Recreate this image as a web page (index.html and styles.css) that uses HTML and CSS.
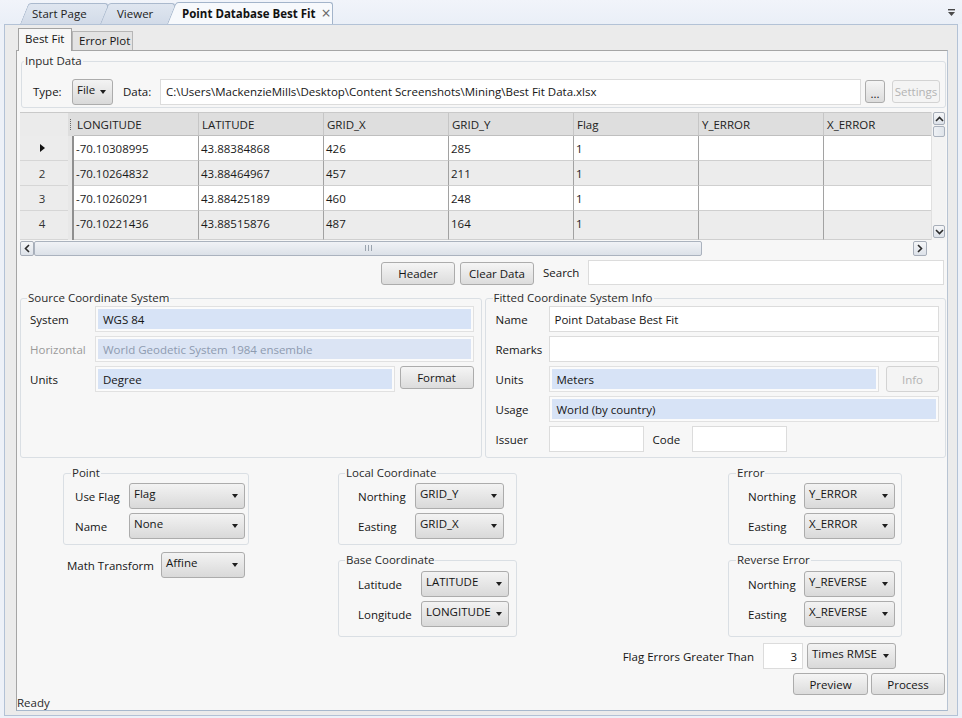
FILE: index.html
```html
<!DOCTYPE html>
<html>
<head>
<meta charset="utf-8">
<title>Point Database Best Fit</title>
<link rel="stylesheet" href="styles.css">
</head>
<body>
<div class="topbar">
  <div class="tab tab-start"><span class="tab-text">Start Page</span></div>
  <div class="tab tab-viewer"><span class="tab-text">Viewer</span></div>
  <div class="tab tab-active"><span class="tab-text">Point Database Best Fit</span><span class="tab-close">×</span></div>
  <svg class="overflow-icon" width="9" height="8" viewBox="0 0 9 8"><rect x="1" y="0" width="7" height="1.4" fill="#4a4a4a"/><polygon points="1,3 8,3 4.5,7" fill="#4a4a4a"/></svg>
</div>
<div class="frame">
  <div class="subtabs">
    <div class="subtab active">Best Fit</div>
    <div class="subtab">Error Plot</div>
  </div>
  <div class="panel">
    <fieldset class="group input-group">
      <legend>Input Data</legend>
      <div class="type-row">
        <span class="type-label">Type:</span>
        <div class="select sel-file"><span class="sel-txt">File</span><span class="caret"></span></div>
        <span class="data-label">Data:</span>
        <div class="textbox path">C:\Users\MackenzieMills\Desktop\Content Screenshots\Mining\Best Fit Data.xlsx</div>
        <div class="btn btn-dots">...</div>
        <div class="btn disabled btn-settings">Settings</div>
      </div>
    </fieldset>

    <div class="datagrid">
      <div class="gtable">
        <div class="grow ghead">
          <div class="rh corner"></div>
          <div class="mk"><span class="dots"></span></div>
          <div class="hc">LONGITUDE</div>
          <div class="hc">LATITUDE</div>
          <div class="hc">GRID_X</div>
          <div class="hc">GRID_Y</div>
          <div class="hc">Flag</div>
          <div class="hc">Y_ERROR</div>
          <div class="hc last">X_ERROR</div>
        </div>
        <div class="grow odd">
          <div class="rh"><span class="cur-tri"></span></div>
          <div class="mk"></div>
          <div class="c">-70.10308995</div><div class="c">43.88384868</div><div class="c">426</div><div class="c">285</div><div class="c">1</div><div class="c"></div><div class="c last"></div>
        </div>
        <div class="grow even">
          <div class="rh">2</div>
          <div class="mk"></div>
          <div class="c">-70.10264832</div><div class="c">43.88464967</div><div class="c">457</div><div class="c">211</div><div class="c">1</div><div class="c"></div><div class="c last"></div>
        </div>
        <div class="grow odd">
          <div class="rh">3</div>
          <div class="mk"></div>
          <div class="c">-70.10260291</div><div class="c">43.88425189</div><div class="c">460</div><div class="c">248</div><div class="c">1</div><div class="c"></div><div class="c last"></div>
        </div>
        <div class="grow even tall">
          <div class="rh">4</div>
          <div class="mk"></div>
          <div class="c">-70.10221436</div><div class="c">43.88515876</div><div class="c">487</div><div class="c">164</div><div class="c">1</div><div class="c"></div><div class="c last"></div>
        </div>
      </div>
      <div class="vscroll">
        <div class="sbtn"><svg width="9" height="6" viewBox="0 0 9 6"><polyline points="1,5 4.5,1.5 8,5" fill="none" stroke="#2b2b2b" stroke-width="1.6"/></svg></div>
        <div class="vthumb"></div>
        <div class="vtrack"></div>
        <div class="sbtn"><svg width="9" height="6" viewBox="0 0 9 6"><polyline points="1,1 4.5,4.5 8,1" fill="none" stroke="#2b2b2b" stroke-width="1.6"/></svg></div>
      </div>
      <div class="hscroll">
        <div class="sbtn hbtn"><svg width="6" height="9" viewBox="0 0 6 9"><polyline points="5,1 1.5,4.5 5,8" fill="none" stroke="#2b2b2b" stroke-width="1.6"/></svg></div>
        <div class="hthumb"><span class="grip"></span><span class="grip"></span><span class="grip"></span></div>
        <div class="htrack"></div>
        <div class="sbtn hbtn"><svg width="6" height="9" viewBox="0 0 6 9"><polyline points="1,1 4.5,4.5 1,8" fill="none" stroke="#2b2b2b" stroke-width="1.6"/></svg></div>
      </div>
      <div class="corner-box"></div>
    </div>

    <div class="btn-row">
      <div class="btn btn-header">Header</div>
      <div class="btn btn-clear">Clear Data</div>
      <span class="search-label">Search</span>
      <div class="textbox search"></div>
    </div>

    <div class="cs-row">
      <fieldset class="group source">
        <legend>Source Coordinate System</legend>
        <div class="form src-form">
          <span class="flabel">System</span>
          <div class="field"><div class="fill">WGS 84</div></div>
          <span class="flabel muted">Horizontal</span>
          <div class="field"><div class="fill muted-fill">World Geodetic System 1984 ensemble</div></div>
          <span class="flabel">Units</span>
          <div class="field-with-btn">
            <div class="field grow1"><div class="fill">Degree</div></div>
            <div class="btn btn-format">Format</div>
          </div>
        </div>
      </fieldset>
      <fieldset class="group fitted">
        <legend>Fitted Coordinate System Info</legend>
        <div class="form fit-form">
          <span class="flabel">Name</span>
          <div class="textbox tb-full">Point Database Best Fit</div>
          <span class="flabel">Remarks</span>
          <div class="textbox tb-full"></div>
          <span class="flabel">Units</span>
          <div class="field-with-btn gap7">
            <div class="field grow1"><div class="fill">Meters</div></div>
            <div class="btn disabled btn-info">Info</div>
          </div>
          <span class="flabel">Usage</span>
          <div class="field"><div class="fill">World (by country)</div></div>
          <span class="flabel">Issuer</span>
          <div class="issuer-row">
            <div class="textbox tb-small"></div>
            <span class="code-label">Code</span>
            <div class="textbox tb-small"></div>
          </div>
        </div>
      </fieldset>
    </div>

    <div class="params">
      <div class="pcol col1">
        <fieldset class="group g-point">
          <legend>Point</legend>
          <div class="pform">
            <span>Use Flag</span>
            <div class="select"><span class="sel-txt">Flag</span><span class="caret"></span></div>
            <span>Name</span>
            <div class="select"><span class="sel-txt">None</span><span class="caret"></span></div>
          </div>
        </fieldset>
        <div class="math-row">
          <span class="math-label">Math Transform</span>
          <div class="select sel-math"><span class="sel-txt">Affine</span><span class="caret"></span></div>
        </div>
      </div>
      <div class="pcol col2">
        <fieldset class="group g-local">
          <legend>Local Coordinate</legend>
          <div class="pform">
            <span>Northing</span>
            <div class="select"><span class="sel-txt">GRID_Y</span><span class="caret"></span></div>
            <span>Easting</span>
            <div class="select"><span class="sel-txt">GRID_X</span><span class="caret"></span></div>
          </div>
        </fieldset>
        <fieldset class="group g-base">
          <legend>Base Coordinate</legend>
          <div class="pform">
            <span>Latitude</span>
            <div class="select"><span class="sel-txt">LATITUDE</span><span class="caret"></span></div>
            <span>Longitude</span>
            <div class="select"><span class="sel-txt">LONGITUDE</span><span class="caret"></span></div>
          </div>
        </fieldset>
      </div>
      <div class="pcol col3">
        <fieldset class="group g-error">
          <legend>Error</legend>
          <div class="pform">
            <span>Northing</span>
            <div class="select"><span class="sel-txt">Y_ERROR</span><span class="caret"></span></div>
            <span>Easting</span>
            <div class="select"><span class="sel-txt">X_ERROR</span><span class="caret"></span></div>
          </div>
        </fieldset>
        <fieldset class="group g-rev">
          <legend>Reverse Error</legend>
          <div class="pform">
            <span>Northing</span>
            <div class="select"><span class="sel-txt">Y_REVERSE</span><span class="caret"></span></div>
            <span>Easting</span>
            <div class="select"><span class="sel-txt">X_REVERSE</span><span class="caret"></span></div>
          </div>
        </fieldset>
      </div>
    </div>

    <div class="flag-row">
      <span class="flag-label">Flag Errors Greater Than</span>
      <div class="textbox num">3</div>
      <div class="select sel-rmse"><span class="sel-txt">Times RMSE</span><span class="caret"></span></div>
    </div>
    <div class="action-row">
      <div class="btn btn-preview">Preview</div>
      <div class="btn btn-process">Process</div>
    </div>
    <div class="status">Ready</div>
  </div>
</div>
</body>
</html>
```
FILE: styles.css
```css
* { box-sizing: border-box; }
html, body { margin: 0; padding: 0; }
body {
  width: 962px;
  height: 718px;
  overflow: hidden;
  background: #edf1f8;
  font-family: "Open Sans", "Noto Sans", "DejaVu Sans", sans-serif;
  font-size: 11px;
  color: #151515;
}

/* ---------- document tabs ---------- */
.topbar {
  height: 24px;
  display: flex;
  align-items: flex-end;
  padding-left: 20px;
  background: linear-gradient(#f1f4fa, #eaeff7);
}
.tab {
  position: relative;
  height: 21px;
  display: flex;
  align-items: center;
  color: #222;
  font-size: 11.5px;
}
.tab::before {
  content: "";
  position: absolute;
  z-index: -1;
  left: 0;
  top: 0;
  bottom: 0;
  width: 22px;
  transform: skewX(-22deg);
  transform-origin: bottom left;
  border-left: 1px solid #aab9cd;
  border-top: 1px solid #aab9cd;
  border-radius: 3px 0 0 0;
  background: linear-gradient(#dfe6f0, #d2dbe8);
}
.tab::after {
  content: "";
  position: absolute;
  z-index: -1;
  left: 12px;
  right: 0;
  top: 0;
  bottom: 0;
  border-top: 1px solid #aab9cd;
  border-right: 1px solid #aab9cd;
  border-radius: 0 3px 0 0;
  background: linear-gradient(#dfe6f0, #d2dbe8);
}
.tab-start { z-index: 1; width: 88px; padding-left: 12px; margin-right: -8px; }
.tab-viewer { z-index: 2; width: 75px; padding-left: 17px; margin-right: -8px; }
.tab-active { z-index: 3; width: 166px; padding-left: 15px; height: 22px; font-weight: bold; color: #111; }
.tab-active::before, .tab-active::after {
  background: #f7f9fc;
  border-color: #a3b4ca;
}
.tab-text { position: relative; }
.tab-close {
  position: relative;
  margin-left: 6px;
  font-weight: normal;
  font-size: 16px;
  line-height: 16px;
  color: #666;
}
.overflow-icon { margin-left: auto; align-self: flex-start; margin-top: 9px; margin-right: 6px; }

/* ---------- frame ---------- */
.frame {
  height: 692px;
  margin: 0 4px;
  border: 1px solid #b3c2d6;
  background: #ebebeb;
  padding: 0 9px 4px 11px;
  display: flex;
  flex-direction: column;
}
.subtabs {
  height: 25px;
  display: flex;
  align-items: flex-end;
  padding-left: 2px;
}
.subtab {
  height: 19px;
  width: 61px;
  padding-left: 6px;
  border: 1px solid #b6b6b6;
  border-bottom: none;
  background: #e3e3e3;
  line-height: 18px;
  font-size: 11.5px;
}
.subtab.active {
  width: 54px;
  height: 23px;
  padding-left: 6px;
  line-height: 19px;
  background: #f7f7f7;
  border-color: #a3a3a3;
  margin-bottom: -1px;
  position: relative;
  z-index: 1;
}
.panel {
  flex: 1;
  background: #f7f7f7;
  border: 1px solid #a5a5a5;
  border-bottom-color: #a7b8cd;
  border-right-color: #b8c4d3;
  padding: 0 1px 0 3px;
  display: flex;
  flex-direction: column;
}

/* ---------- group boxes ---------- */
.group {
  margin: 0;
  min-width: 0;
  border: 1px solid #dadfe4;
  border-radius: 3px;
}
.group > legend {
  padding: 0 1px;
  line-height: 14px;
  color: #2a2a2a;
  font-size: 11.5px;
}

.input-group { margin: 3px 0 0 1px; padding: 11px 5px 3px 11px; }
.input-group > legend { margin-left: -9px; }
.type-row { display: flex; align-items: center; height: 25px; }
.type-label { width: 39px; font-size: 11.5px; }
.sel-file { width: 41px; height: 25px; padding-right: 5px; }
.data-label { margin-left: 10px; width: 37px; font-size: 11.5px; }
.path { flex: 1; height: 25px; padding-left: 5px; font-size: 11.5px; }
.btn-dots { width: 20px; height: 25px; margin-left: 4px; font-size: 9px; padding-top: 3px; }
.btn-settings { width: 48px; height: 25px; margin-left: 7px; }

/* ---------- common controls ---------- */
.btn {
  height: 23px;
  border: 1px solid #acacac;
  border-radius: 3px;
  background: linear-gradient(#f5f5f5, #dcdcdc);
  display: flex;
  align-items: center;
  justify-content: center;
  color: #151515;
  font-size: 11.5px;
}
.btn.disabled {
  border-color: #d3d3d3;
  background: #f4f4f4;
  color: #b3b3b3;
}
.textbox {
  height: 26px;
  border: 1px solid #dcdcdc;
  background: #fff;
  display: flex;
  align-items: center;
  padding-left: 5px;
  white-space: nowrap;
  overflow: hidden;
}
.select {
  height: 26px;
  border: 1px solid #acacac;
  border-radius: 3px;
  background: linear-gradient(#f3f3f3, #d9d9d9);
  display: flex;
  align-items: center;
  padding: 0 6px 0 4px;
  white-space: nowrap;
  font-size: 11.5px;
}
.sel-txt { padding-bottom: 5px; }
.caret {
  margin-left: auto;
  flex: none;
  width: 0;
  height: 0;
  border-left: 3px solid transparent;
  border-right: 3px solid transparent;
  border-top: 4px solid #1e1e1e;
}
.field {
  height: 26px;
  border: 1px solid #e1e1e1;
  background: #fbfbfb;
  padding: 2px;
}
.fill {
  height: 100%;
  background: #d7e3f6;
  display: flex;
  align-items: center;
  padding-left: 5px;
  white-space: nowrap;
  font-size: 11.5px;
}
.muted { color: #9a9a9a; }
.muted-fill { color: #8e9bb0; background: #dbe4f4; }

/* ---------- data grid ---------- */
.datagrid {
  margin-top: 4px;
  height: 144px;
  display: grid;
  grid-template-columns: 911px 15px;
  grid-template-rows: 128px 16px;
}
.gtable { overflow: hidden; background: #f7f7f7; }
.grow {
  display: grid;
  grid-template-columns: 48px 6px repeat(6, 125px) 107px;
  height: 25px;
}
.grow.ghead { height: 24px; background: #dedede; border-top: 1px solid #c9c9c9; }
.grow.tall { height: 29px; }
.rh {
  background: #ececec;
  border-bottom: 1px solid #d6d6d6;
  display: flex;
  align-items: center;
  justify-content: center;
  padding-right: 4px;
  color: #333;
  font-size: 11.5px;
}
.rh.corner { background: #ebebeb; border-bottom: none; }
.cur-tri {
  width: 0; height: 0;
  border-top: 4px solid transparent;
  border-bottom: 4px solid transparent;
  border-left: 5px solid #111;
}
.mk {
  background: #e8e8e8;
  border-right: 2px solid #8f8f8f;
}
.ghead .mk {
  background: #dedede;
  border-right: none;
  display: flex;
  align-items: center;
  padding-left: 2px;
}
.dots { width: 1px; height: 11px; border-left: 1px dotted #6a6a6a; }
.hc {
  display: flex;
  align-items: center;
  padding-left: 3px;
  border-right: 1px solid #c6c6c6;
  border-bottom: 1px solid #bfbfbf;
  color: #222;
  font-size: 11.5px;
}
.hc.last { border-right: none; }
.c {
  display: flex;
  align-items: center;
  padding-left: 2px;
  border-right: 1px solid #a2a2a2;
  border-bottom: 1px solid #cfcfcf;
  font-size: 11.5px;
  color: #1a1a1a;
}
.c.last { border-right: none; }
.odd .c { background: #fff; }
.even .c { background: #ececec; }
.tall .c { align-items: flex-start; padding-top: 5px; }
.tall .rh { align-items: flex-start; padding-top: 5px; }

.vscroll {
  background: #f3f3f3;
  border-left: 1px solid #e0e0e0;
  display: flex;
  flex-direction: column;
  padding: 0 1px;
}
.sbtn {
  height: 13px;
  border: 1px solid #a7aeb9;
  border-radius: 2px;
  background: linear-gradient(#f5f6f8, #dde2e9);
  display: flex;
  align-items: center;
  justify-content: center;
}
.vthumb {
  height: 11px;
  margin-top: 1px;
  border: 1px solid #aab2be;
  border-radius: 2px;
  background: linear-gradient(90deg, #eef1f5, #dfe4ea);
}
.vtrack { flex: 1; }
.vscroll .sbtn:last-child { margin-bottom: 2px; }
.hscroll {
  display: flex;
  align-items: center;
  background: #f7f7f7;
  padding-right: 4px;
}
.hbtn { width: 14px; height: 15px; }
.hthumb {
  width: 668px;
  height: 15px;
  border: 1px solid #aab2be;
  border-radius: 2px;
  background: linear-gradient(#f0f2f6, #dce1e8);
  display: flex;
  justify-content: center;
  align-items: center;
  gap: 2px;
}
.grip { width: 1px; height: 6px; background: #9aa3ae; }
.htrack { flex: 1; }
.corner-box { background: #f7f7f7; }

/* ---------- button row ---------- */
.btn-row {
  margin-top: 4px;
  height: 25px;
  display: flex;
  justify-content: flex-end;
  align-items: center;
  padding-right: 2px;
}
.btn-header { width: 74px; height: 23px; align-self: flex-end; }
.btn-clear { width: 74px; height: 23px; margin-left: 5px; align-self: flex-end; }
.search-label { width: 45px; margin-left: 9px; font-size: 11.5px; }
.search { width: 356px; height: 25px; }

/* ---------- coordinate systems ---------- */
.cs-row { margin-top: 6px; display: flex; gap: 3px; }
.source { flex: 1; padding: 1px 7px 5px 9px; }
.source > legend { margin-left: -3px; }
.fitted { flex: 1; padding: 1px 6px 5px 10px; }
.fitted > legend { margin-left: -3px; }
.form {
  display: grid;
  grid-auto-rows: 26px;
  row-gap: 4px;
  align-items: center;
}
.src-form { grid-template-columns: 65px 1fr; }
.fit-form { grid-template-columns: 53px 1fr; }
.flabel { font-size: 11.5px; }
.field-with-btn { display: flex; gap: 5px; height: 26px; }
.field-with-btn.gap7 { gap: 7px; }
.grow1 { flex: 1; }
.btn-format { width: 74px; height: 23px; }
.btn-info { width: 53px; height: 26px; }
.tb-full { height: 26px; font-size: 11.5px; }
.issuer-row { display: flex; align-items: center; }
.tb-small { width: 95px; }
.code-label { width: 39px; margin-left: 9px; font-size: 11.5px; }

/* ---------- parameters ---------- */
.params { margin-top: 8px; display: flex; align-items: flex-start; }
.pcol { display: flex; flex-direction: column; }
.col1 { width: 186px; margin-left: 43px; }
.col2 { width: 179px; margin-left: 89px; }
.col3 { width: 174px; margin-left: 211px; }
.pform {
  display: grid;
  grid-auto-rows: 26px;
  row-gap: 4px;
  align-items: center;
  font-size: 11.5px;
}
.g-point { padding: 3px 3px 5px 11px; }
.g-point > legend { margin-left: -4px; }
.g-point .pform { grid-template-columns: 54px 116px; }
.math-row { margin-top: 7px; height: 26px; display: flex; align-items: center; padding-left: 4px; font-size: 11.5px; }
.math-label { width: 94px; }
.sel-math { width: 84px; }
.g-local { padding: 3px 12px 5px 19px; }
.g-local > legend { margin-left: -13px; }
.g-local .pform { grid-template-columns: 57px 89px; }
.g-base { margin-top: 8px; padding: 4px 7px 9px 19px; }
.g-base > legend { margin-left: -13px; }
.g-base .pform { grid-template-columns: 63px 88px; }
.g-error { padding: 3px 6px 5px 19px; }
.g-error > legend { margin-left: -12px; }
.g-error .pform { grid-template-columns: 56px 91px; }
.g-rev { margin-top: 8px; padding: 4px 6px 9px 19px; }
.g-rev > legend { margin-left: -12px; }
.g-rev .pform { grid-template-columns: 56px 91px; }

/* ---------- bottom ---------- */
.flag-row {
  margin-top: 6px;
  height: 26px;
  display: flex;
  justify-content: flex-end;
  align-items: center;
  padding-right: 50px;
  font-size: 11.5px;
}
.flag-label { margin-right: 9px; }
.num { width: 40px; justify-content: flex-end; padding-right: 5px; padding-left: 0; }
.sel-rmse { width: 89px; margin-left: 4px; }
.action-row {
  margin-top: 4px;
  height: 22px;
  display: flex;
  justify-content: flex-end;
  gap: 3px;
  padding-right: 1px;
}
.btn-preview { width: 75px; height: 22px; }
.btn-process { width: 74px; height: 22px; }
.status {
  margin-top: auto;
  margin-left: -3px;
  line-height: 14px;
  font-size: 11.5px;
  color: #2a2a2a;
}
```
